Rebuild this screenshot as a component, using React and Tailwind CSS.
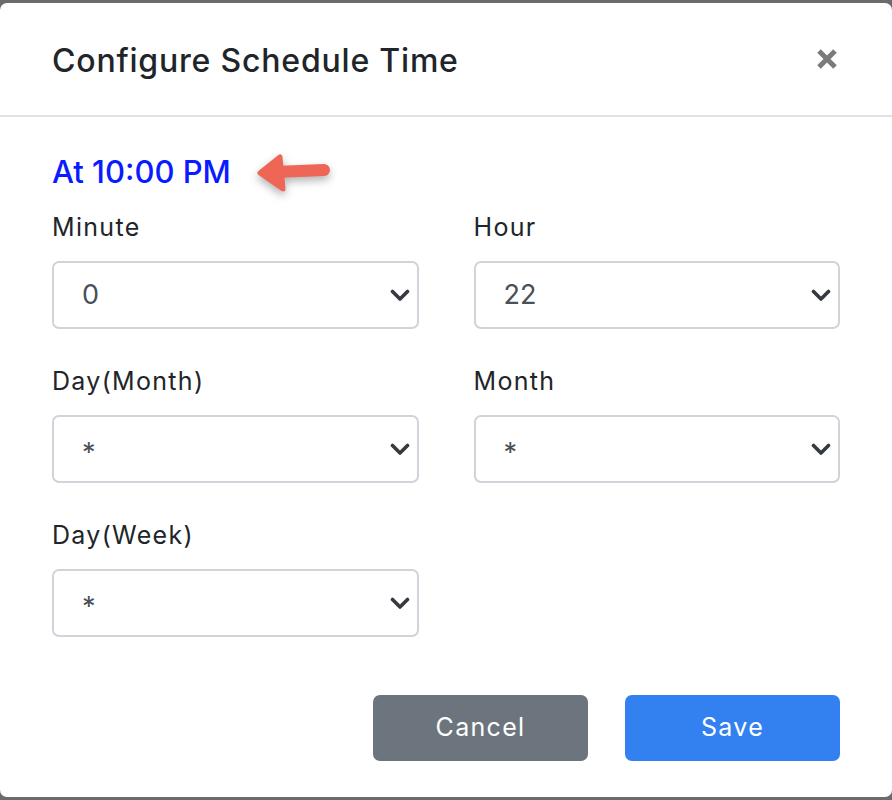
import { useState } from "react";

const fields = [
    [
        { label: "Minute", value: "0" },
        { label: "Hour", value: "22" },
    ],
    [
        { label: "Day(Month)", value: "*" },
        { label: "Month", value: "*" },
    ],
    [{ label: "Day(Week)", value: "*" }],
];

function Chevron() {
    return (
        <svg width="20" height="13" viewBox="0 0 20 13" fill="none" className="shrink-0">
            <path d="M2.5 2.5l7.5 7.5 7.5-7.5" stroke="#343a40" strokeWidth="3.6" strokeLinecap="round" strokeLinejoin="round" />
        </svg>
    );
}

function SelectBox({ label, value }) {
    return (
        <div className="w-[367px]">
            <div className="text-[25px] leading-[36px] tracking-[1.3px] text-[#212529] mb-4">{label}</div>
            <div className="h-[68px] border-2 border-[#ced4da] rounded-[7px] flex items-center justify-between pl-[28px] pr-[7px] bg-white">
                <span className={`text-[27px] text-[#495057] ${value === "*" ? "mt-[8px]" : ""}`}>{value}</span>
                <Chevron />
            </div>
        </div>
    );
}

export default function App() {
    const [schedule] = useState("At 10:00 PM");

    return (
        <div className="w-[892px] h-[800px] bg-[#6b6b6b] py-[3px]" style={{ fontFamily: "Inter, 'Noto Sans', sans-serif" }}>
            <div className="h-[794px] bg-white rounded-[7px] flex flex-col">
                {/* Header */}
                <div className="h-[114px] border-b-2 border-[#dee2e6] px-[52px] pt-[4px] flex items-center justify-between">
                    <h5 className="text-[32px] font-medium text-[#212529] tracking-[0.8px]">Configure Schedule Time</h5>
                    <svg width="22" height="22" viewBox="0 0 22 22" className="mr-[2px] -mt-[4px]">
                        <path d="M3 3l16 16M19 3L3 19" stroke="#7b7b7b" strokeWidth="5" />
                    </svg>
                </div>

                {/* Body */}
                <div className="px-[52px] pt-[38px]">
                    <div className="flex items-center h-[35px]">
                        <span className="text-[31px] font-medium text-[#0a1bff]">{schedule}</span>
                        <svg width="85" height="45" viewBox="0 0 85 45" className="ml-[22px] mt-[2px]" style={{ filter: "drop-shadow(0 4px 4px rgba(0,0,0,0.3))" }}>
                            <path d="M22 21L71 19" stroke="#ee6655" strokeWidth="12" strokeLinecap="round" />
                            <path d="M7 22L27 6L30 38Z" fill="#ee6655" stroke="#ee6655" strokeWidth="5" strokeLinejoin="round" />
                        </svg>
                    </div>

                    <div className="mt-[19px] flex flex-col gap-[34px]">
                        {fields.map((row, i) => (
                            <div key={i} className="flex gap-[55px]">
                                {row.map(f => (
                                    <SelectBox key={f.label} label={f.label} value={f.value} />
                                ))}
                            </div>
                        ))}
                    </div>

                    {/* Footer */}
                    <div className="flex justify-end gap-[37px] mt-[58px]">
                        <button className="w-[215px] h-[66px] rounded-[7px] bg-[#6c757d] text-white text-[25px] tracking-[1.3px]">Cancel</button>
                        <button className="w-[215px] h-[66px] rounded-[7px] bg-[#3381f0] text-white text-[25px] tracking-[1.3px]">Save</button>
                    </div>
                </div>
            </div>
        </div>
    );
}
